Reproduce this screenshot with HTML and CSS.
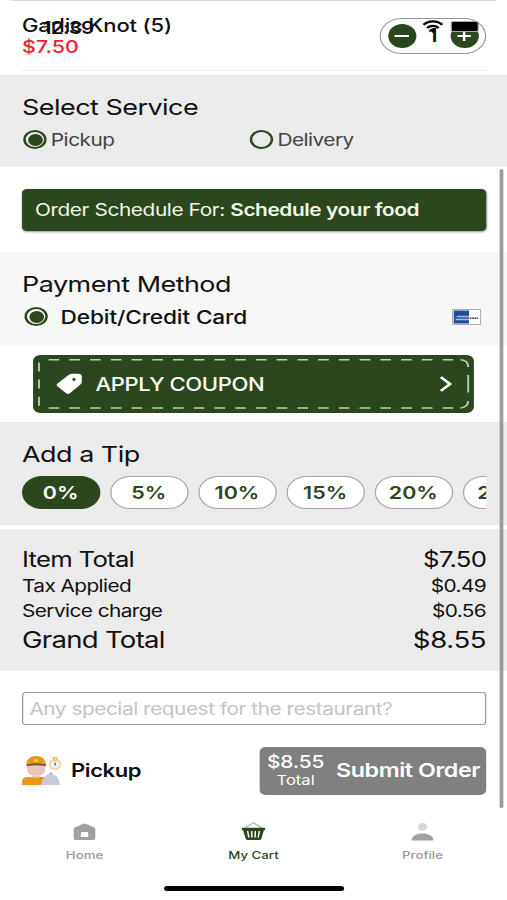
FILE: index.html
```
<!DOCTYPE html>
<html lang="en">
<head>
    <meta charset="UTF-8">
    <meta name="viewport" content="width=device-width, initial-scale=1.0">
    <title>My Cart</title>
    <link rel="stylesheet" href="styles.css">
</head>
<body>
    <div class="app">
        <!-- status bar floats over the cart -->
        <div class="status-bar">
            <span class="time">12:39</span>
            <svg class="wifi" width="17" height="13" viewBox="0 0 17 13" fill="none" stroke="#000" stroke-width="2.2">
                <path d="M.8 4.800C5 .2 12 .2 16.200 4.800"/>
                <path d="M3.800 8C6.500 5.200 10.500 5.200 13.200 8"/>
                <path d="M6 10.200Q8.500 8 11 10.200L8.500 13z" fill="#000" stroke="none"/>
            </svg>
            <span class="battery"></span>
        </div>

        <section class="item">
            <div>
                <div class="item-name">Garlic Knot (5)</div>
                <div class="item-price">$7.50</div>
            </div>
            <div class="stepper">
                <button class="step"><svg width="12" height="12" viewBox="0 0 12 12"><path d="M0 6H12"/></svg></button>
                <span class="count">1</span>
                <button class="step"><svg width="12" height="12" viewBox="0 0 12 12"><path d="M0.500 6H11.500M6 1V11"/></svg></button>
            </div>
        </section>

        <section class="service">
            <h2>Select Service</h2>
            <div class="options">
                <label class="option"><span class="radio checked"></span>Pickup</label>
                <label class="option"><span class="radio"></span>Delivery</label>
            </div>
        </section>

        <section class="schedule">
            <button class="schedule-btn">Order Schedule For: <b>Schedule your food</b></button>
        </section>

        <section class="payment">
            <h2>Payment Method</h2>
            <div class="card-row">
                <span class="radio checked"></span>
                <span class="card-name">Debit/Credit Card</span>
                <svg class="card-logo" width="24" height="16" viewBox="0 0 24 16">
                    <rect x="0.500" y="0.500" width="23" height="15" fill="#fff" stroke="#a9adb2"/>
                    <rect x="1.500" y="1.500" width="12.500" height="13" fill="#1d4f96"/>
                    <path d="M4 7.500H14M3 10.500H14" stroke="#a5bad5" stroke-width="1.300"/>
                    <path d="M4 9H14" stroke="#5b82b5" stroke-dasharray="1.500 .7"/>
                    <path d="M14.500 9.300H21.500" stroke="#555" stroke-width="1.500" stroke-dasharray="1.500 .4"/>
                </svg>
            </div>
        </section>

        <section class="coupon">
            <button class="coupon-btn">
                <svg class="stitches" width="360" height="58" viewBox="0 0 360 58" fill="none">
                    <path d="M12.700 4.700H344M12.700 53H344" stroke-dasharray="8.700 8.230"/>
                    <path d="M4.800 7.500V51" stroke-dasharray="9 8.100"/>
                    <path d="M349 4.700Q355.300 5 355.300 12M355.300 20V37.500M355.300 46Q355.300 52 349 53"/>
                </svg>
                <svg class="tag" width="22" height="22" viewBox="0 0 22 22">
                    <path fill="#fff" fill-rule="evenodd" d="M.8 10.800L10 2Q11.200 .8 13 .8H17.500Q20.800 .8 20.800 4V8.500Q20.800 10.500 19.300 12L11 20.300Q9.500 21.700 8 20.300L.8 13.200Q-.4 12 .8 10.800zM13 6.500a1.400 1.400 0 1 0 2.800 0a1.400 1.400 0 1 0-2.800 0z"/>
                </svg>
                <span class="coupon-text">APPLY COUPON</span>
                <svg class="chevron" width="10" height="16" viewBox="0 0 10 16"><path d="M1 1.200L8.500 8L1 14.800"/></svg>
            </button>
        </section>

        <section class="tip">
            <h2>Add a Tip</h2>
            <div class="pills">
                <button class="pill active">0%</button>
                <button class="pill">5%</button>
                <button class="pill">10%</button>
                <button class="pill">15%</button>
                <button class="pill">20%</button>
                <button class="pill">25%</button>
            </div>
        </section>

        <section class="totals">
            <div class="line"><span>Item Total</span><span>$7.50</span></div>
            <div class="line small"><span>Tax Applied</span><span>$0.49</span></div>
            <div class="line small"><span>Service charge</span><span>$0.56</span></div>
            <div class="line grand"><span>Grand Total</span><span class="amount">$8.55</span></div>
        </section>

        <section class="checkout">
            <input class="request" type="text" placeholder="Any special request for the restaurant?">
            <div class="submit-row">
                <svg class="courier" width="32" height="30" viewBox="0 0 32 30">
                    <path d="M4 9H19V12Q19 20 11.500 20Q4 20 4 12z" fill="#e9c5bd"/>
                    <path d="M3.500 10Q3.500 0 11.500 0T19.500 10z" fill="#ef951c"/>
                    <path d="M4 9.300Q11.500 7 19.500 9.300" stroke="#7a5a3c" stroke-width="1.800" fill="none"/>
                    <circle cx="11.500" cy="4.500" r="1.600" fill="#ffc35c"/>
                    <path d="M0 29V25Q0 21 5 21H20V29z" fill="#ef951c"/>
                    <path d="M8 20Q12 24 15 20" fill="#e9c5bd"/>
                    <path d="M15.500 29Q17 18 23.500 18T31 29z" fill="#c9ccd6"/>
                    <circle cx="23.500" cy="17.500" r="1.300" fill="#aeb2bd"/>
                    <circle cx="27" cy="8.500" r="4.500" fill="#edf2f5" stroke="#f5d08c" stroke-width="1.300"/>
                    <circle cx="27" cy="2.800" r="1.500" fill="none" stroke="#f3b750" stroke-width="1.300"/>
                    <path d="M27 6.500V9.500" stroke="#567" stroke-width="1.100"/>
                </svg>
                <span class="mode">Pickup</span>
                <button class="submit">
                    <span class="submit-total"><b>$8.55</b><span>Total</span></span>
                    <span class="submit-text">Submit Order</span>
                </button>
            </div>
        </section>

        <nav class="tabs">
            <a class="tab">
                <svg width="18" height="20" viewBox="0 0 18 20"><path fill="#a0a0a0" fill-rule="evenodd" d="M0 7Q0 6 1 5.500L7.500 2Q9 1.200 10.500 2L17 5.500Q18 6 18 7V16Q18 18 16 18H2Q0 18 0 16zM6 11V15H12V11Q12 10 11 10H7Q6 10 6 11z"/></svg>
                <span>Home</span>
            </a>
            <a class="tab current">
                <svg width="20" height="20" viewBox="0 0 20 20" fill="none">
                    <path d="M3 6L10 .8L17 6" stroke="#bbb" stroke-width="1.300"/>
                    <path d="M.5 5.800H19.500V8.200H18.500L16.500 16.500Q16.200 18 14.500 18H5.500Q3.800 18 3.500 16.500L1.500 8.200H.5z" fill="#2c471e"/>
                    <path d="M5.200 9L6.200 15.500M8.500 9L8.700 15.500M11.500 9L11.300 15.500M14.800 9L13.800 15.500" stroke="#fff" stroke-width="1.200"/>
                </svg>
                <span>My Cart</span>
            </a>
            <a class="tab">
                <svg width="18" height="20" viewBox="0 0 18 20"><ellipse cx="9" cy="5" rx="3.800" ry="4" fill="#d6d6d6"/><path d="M0 18.500C0 9 18 9 18 18.500z" fill="#a0a0a0"/></svg>
                <span>Profile</span>
            </a>
        </nav>
        <div class="home-indicator"></div>
        <div class="scrollbar"></div>
    </div>
</body>
</html>
```
FILE: styles.css
```
* {
    box-sizing: border-box;
}
body {
    margin: 0;
    background: #fff;
    overflow: hidden;
}
.app {
    position: relative;
    width: 414px;
    height: 900px;
    transform: scaleX(1.22464);
    transform-origin: 0 0;
    font-family: Inter, "Liberation Sans", sans-serif;
    color: #111;
    overflow: hidden;
}
button, input {
    font-family: inherit;
    margin: 0;
    padding: 0;
    border: none;
}
h2 {
    margin: 0;
    font-size: 22px;
    font-weight: 400;
    line-height: 30px;
    letter-spacing: -0.42px;
    white-space: nowrap;
}
section {
    padding: 0 17px 0 18px;
}

.status-bar {
    position: absolute;
    top: 18px;
    left: 35px;
    right: 23px;
    height: 20px;
    display: flex;
    z-index: 2;
}
.time {
    font-size: 17px;
    font-weight: 600;
    line-height: 20px;
    letter-spacing: -0.7px;
}
.wifi {
    margin: 2px 6px 0 auto;
}
.battery {
    width: 23px;
    height: 11px;
    margin-top: 3px;
    border: 1px solid #aaa;
    border-radius: 2px;
    background: #000;
}

.item {
    height: 75px;
    display: flex;
    justify-content: space-between;
    padding-top: 15px;
    background: linear-gradient(#dcdcdc, #dcdcdc) 9px 0 / 396px 1px no-repeat,
        linear-gradient(#eee, #eee) 18px 70px / 379px 1px no-repeat;
}
.item-name {
    font-size: 18px;
    font-weight: 500;
    line-height: 21px;
    letter-spacing: -0.15px;
}
.item-price {
    font-size: 17.5px;
    font-weight: 500;
    line-height: 22px;
    color: #ec2230;
}
.stepper {
    width: 87px;
    height: 36px;
    margin-top: 2.5px;
    padding: 0 5.5px;
    display: flex;
    align-items: center;
    justify-content: space-between;
    border: 1px solid #999;
    border-radius: 18px;
}
.step {
    width: 23px;
    height: 24px;
    display: flex;
    align-items: center;
    justify-content: center;
    border-radius: 50%;
    background: #2c471e;
}
.step path {
    stroke: #fff;
    stroke-width: 2;
}
.count {
    font-size: 18px;
    font-weight: 600;
}

.service {
    height: 92px;
    padding-top: 16.5px;
    background: #ebebeb;
}
.options {
    display: grid;
    grid-template-columns: 185px 1fr;
    margin-top: 7px;
}
.option {
    display: flex;
    align-items: center;
    gap: 4px;
    padding-left: 0.5px;
    font-size: 17px;
    line-height: 22px;
    letter-spacing: -0.42px;
    color: #444;
}
.radio {
    width: 19px;
    height: 19px;
    padding: 1.5px;
    border: 2px solid #2c471e;
    border-radius: 50%;
}
.radio.checked {
    background: #2c471e content-box;
}

.schedule {
    height: 85px;
    padding-top: 21.5px;
}
.schedule-btn {
    width: 100%;
    height: 42px;
    padding-left: 10.5px;
    border-radius: 4px;
    background: #2c471e;
    box-shadow: 0 1px 2px rgba(0, 0, 0, 0.4);
    color: #f0f6ec;
    font-size: 17px;
    letter-spacing: -0.33px;
    text-align: left;
    white-space: nowrap;
}
.schedule-btn b {
    font-weight: 600;
}

.payment {
    height: 93.5px;
    padding-top: 16.5px;
    background: #f7f7f7;
}
.card-row {
    display: flex;
    align-items: center;
    height: 24px;
    margin-top: 6px;
    padding: 0 4px 0 1.5px;
}
.card-name {
    margin-left: 11px;
    font-size: 18.5px;
    font-weight: 500;
    letter-spacing: -0.12px;
}
.card-logo {
    margin-left: auto;
}

.coupon {
    height: 76.5px;
    padding: 9.5px 27px 0;
}
.coupon-btn {
    position: relative;
    width: 360px;
    height: 58px;
    display: flex;
    align-items: center;
    padding: 0 18px 0 19px;
    border-radius: 6px;
    background: #2c471e;
    color: #fff;
}
.stitches {
    position: absolute;
    top: 0;
    left: 0;
    stroke: #bdd0b3;
    stroke-width: 1.5;
}
.coupon-text {
    margin-left: 10px;
    font-size: 18px;
    font-weight: 500;
    letter-spacing: -0.33px;
}
.chevron {
    margin-left: auto;
    fill: none;
    stroke: #fff;
    stroke-width: 2.4;
}

.tip {
    height: 103px;
    padding-top: 16.5px;
    background: #ebebeb;
}
.pills {
    display: flex;
    gap: 8px;
    margin-top: 7px;
    margin-left: -0.5px;
    overflow: hidden;
}
.pill {
    flex: 0 0 64px;
    height: 33px;
    border: 1px solid #a5a5a5;
    border-radius: 17px;
    background: #fff;
    color: #2c471e;
    font-size: 17.5px;
    font-weight: 600;
}
.pill.active {
    border-color: #2c471e;
    background: #2c471e;
    color: #fff;
}

.totals {
    height: 141.5px;
    margin-top: 4px;
    padding-top: 16.5px;
    background: #ebebeb;
}
.line {
    display: flex;
    justify-content: space-between;
    font-size: 21px;
    line-height: 28px;
    letter-spacing: -0.6px;
}
.line.small {
    font-size: 17px;
    line-height: 25px;
    letter-spacing: -0.48px;
}
.line.grand {
    font-size: 22.5px;
    line-height: 32px;
}
.amount {
    letter-spacing: -0.3px;
}

.checkout {
    height: 141.5px;
    padding-top: 21.5px;
}
.request {
    width: 100%;
    height: 33px;
    padding: 0 5px;
    display: block;
    border: 1px solid #999;
    border-radius: 3px;
    font-size: 17px;
    letter-spacing: -0.38px;
}
.request::placeholder {
    color: #c4c4c4;
}
.submit-row {
    display: flex;
    align-items: center;
    height: 48px;
    margin-top: 21.5px;
}
.mode {
    margin-left: 8px;
    font-size: 18px;
    font-weight: 600;
    letter-spacing: -0.35px;
}
.submit {
    width: 185px;
    height: 48px;
    margin-left: auto;
    padding: 0 5px 0 6px;
    display: flex;
    align-items: center;
    justify-content: space-between;
    border-radius: 5px;
    background: #808080;
    color: #fff;
    white-space: nowrap;
}
.submit-total {
    display: flex;
    flex-direction: column;
    align-items: center;
    font-size: 13.5px;
    line-height: 17px;
}
.submit-total b {
    font-size: 17px;
    font-weight: 500;
    line-height: 19px;
    letter-spacing: -0.1px;
}
.submit-text {
    font-size: 19px;
    font-weight: 600;
    letter-spacing: -0.35px;
}

.tabs {
    display: grid;
    grid-template-columns: repeat(3, 1fr);
    padding-top: 10px;
}
.tab {
    display: flex;
    flex-direction: column;
    align-items: center;
    font-size: 10.8px;
    font-weight: 500;
    line-height: 14px;
    color: #999;
}
.tab span {
    margin-top: 7px;
}
.tab.current {
    color: #2c471e;
}
.home-indicator {
    position: absolute;
    bottom: 9.5px;
    left: 134px;
    width: 147px;
    height: 5px;
    border-radius: 3px;
    background: #000;
}
.scrollbar {
    position: absolute;
    top: 169px;
    left: 407.5px;
    width: 3.3px;
    height: 639px;
    border-radius: 2px;
    background: #9a9a9a;
}
```
